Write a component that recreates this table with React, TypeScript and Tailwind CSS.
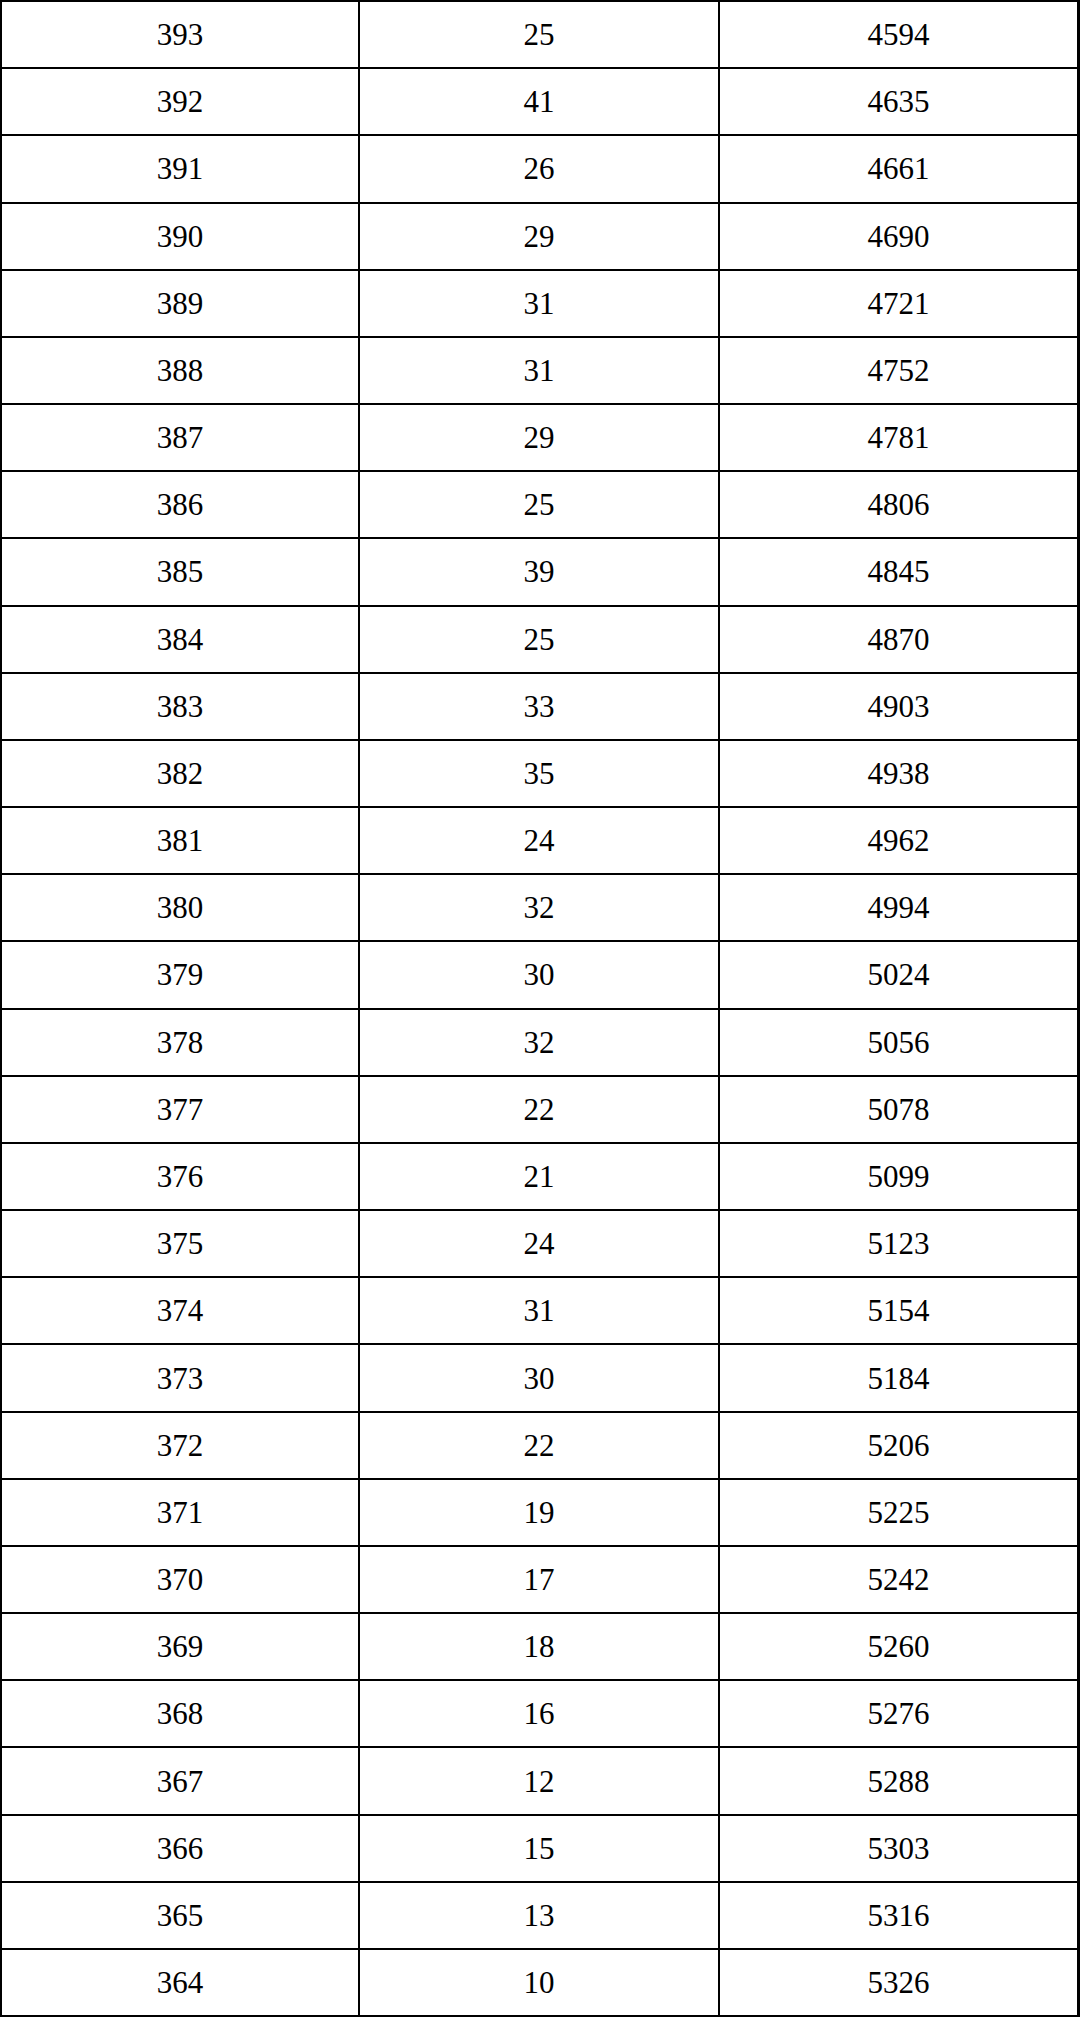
import React from 'react';

const rows: [number, number, number][] = [
  [393, 25, 4594],
  [392, 41, 4635],
  [391, 26, 4661],
  [390, 29, 4690],
  [389, 31, 4721],
  [388, 31, 4752],
  [387, 29, 4781],
  [386, 25, 4806],
  [385, 39, 4845],
  [384, 25, 4870],
  [383, 33, 4903],
  [382, 35, 4938],
  [381, 24, 4962],
  [380, 32, 4994],
  [379, 30, 5024],
  [378, 32, 5056],
  [377, 22, 5078],
  [376, 21, 5099],
  [375, 24, 5123],
  [374, 31, 5154],
  [373, 30, 5184],
  [372, 22, 5206],
  [371, 19, 5225],
  [370, 17, 5242],
  [369, 18, 5260],
  [368, 16, 5276],
  [367, 12, 5288],
  [366, 15, 5303],
  [365, 13, 5316],
  [364, 10, 5326],
];

const App: React.FC = () => {
  return (
    <div className="w-[1080px] h-[2017px] bg-white">
      <div
        className="h-full flex flex-col border-t-2 border-l-2 border-r-[3px] border-b-2 border-black text-black text-[31px] leading-none"
        style={{ fontFamily: '"Liberation Serif", "Times New Roman", serif' }}
      >
        {rows.map((row, i) => (
          <div
            key={row[0]}
            className={`flex-1 grid grid-cols-[356px_360px_1fr] ${i > 0 ? 'border-t-2 border-black' : ''}`}
          >
            {row.map((value, j) => (
              <div
                key={j}
                className={`flex items-center justify-center ${j > 0 ? 'border-l-2 border-black' : ''}`}
              >
                {value}
              </div>
            ))}
          </div>
        ))}
      </div>
    </div>
  );
};

export default App;
